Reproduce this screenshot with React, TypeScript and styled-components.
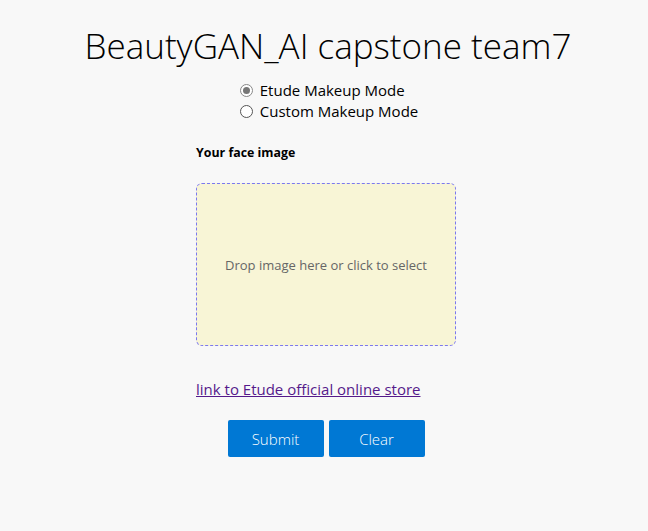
import React, { useState } from 'react'
import styled, { createGlobalStyle } from 'styled-components'

const GlobalStyle = createGlobalStyle`
  body {
    margin: 0;
    background: #f8f8f8;
    font-family: 'Open Sans', 'Noto Sans', sans-serif;
    color: #000;
  }
`

const Page = styled.div`
  display: flex;
  flex-direction: column;
  align-items: center;
  padding-top: 22px;
  padding-left: 4px;
`

const Title = styled.h1`
  margin: 0 0 0 4px;
  font-size: 35px;
  font-weight: 300;
  line-height: 48px;
`

const ModeGroup = styled.div`
  display: flex;
  flex-direction: column;
  margin-top: 10px;
  padding-left: 6px;
`

const ModeOption = styled.label`
  display: flex;
  align-items: center;
  gap: 7px;
  font-size: 15px;
  line-height: 21px;
  cursor: pointer;
`

const RadioDot = styled.span<{ checked: boolean }>`
  width: 11px;
  height: 11px;
  border-radius: 50%;
  border: 1px solid ${p => (p.checked ? '#888' : '#555')};
  background: #fff;
  position: relative;
  &::after {
    content: '';
    display: ${p => (p.checked ? 'block' : 'none')};
    position: absolute;
    left: 2px;
    top: 2px;
    width: 7px;
    height: 7px;
    border-radius: 50%;
    background: #777;
  }
`

const Form = styled.div`
  width: 260px;
  display: flex;
  flex-direction: column;
  margin-top: 22px;
`

const Label = styled.div`
  font-size: 12.4px;
  font-weight: 700;
  line-height: 18px;
`

const DropZone = styled.div`
  margin-top: 21px;
  height: 163px;
  box-sizing: border-box;
  border: 1px dashed #7b78f0;
  border-radius: 6px;
  background: #f8f5d6;
  display: flex;
  align-items: center;
  justify-content: center;
  font-size: 13px;
  color: #666;
  cursor: pointer;
`

const StoreLink = styled.a`
  margin-top: 33px;
  font-size: 15px;
  line-height: 20px;
  color: #551a8b;
  text-decoration: underline;
`

const Buttons = styled.div`
  display: flex;
  justify-content: center;
  gap: 5px;
  margin-top: 21px;
`

const Button = styled.button`
  width: 96px;
  height: 37px;
  border: none;
  border-radius: 2px;
  background: #0078d4;
  color: #fff;
  font-family: inherit;
  font-size: 15px;
  font-weight: 300;
  cursor: pointer;
`

const modes = ['Etude Makeup Mode', 'Custom Makeup Mode']

export default function App() {
  const [mode, setMode] = useState(0)
  return (
    <>
      <GlobalStyle />
      <Page>
        <Title>BeautyGAN_AI capstone team7</Title>
        <ModeGroup>
          {modes.map((m, i) => (
            <ModeOption key={m} onClick={() => setMode(i)}>
              <RadioDot checked={mode === i} />
              {m}
            </ModeOption>
          ))}
        </ModeGroup>
        <Form>
          <Label>Your face image</Label>
          <DropZone>Drop image here or click to select</DropZone>
          <StoreLink href="#">link to Etude official online store</StoreLink>
          <Buttons>
            <Button>Submit</Button>
            <Button>Clear</Button>
          </Buttons>
        </Form>
      </Page>
    </>
  )
}
